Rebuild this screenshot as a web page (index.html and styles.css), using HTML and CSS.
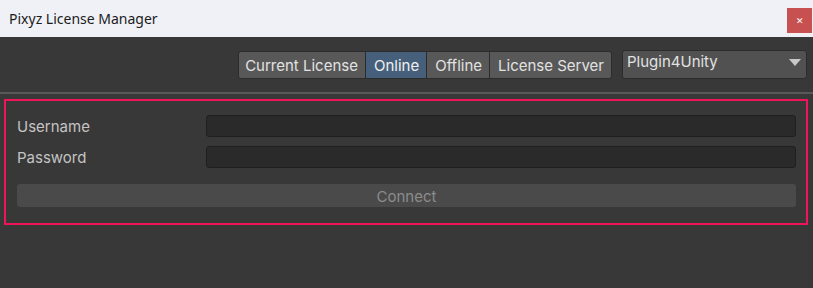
FILE: index.html
```html
<!DOCTYPE html>
<html>
	<head>
		<meta charset="utf-8">
		<title>Pixyz License Manager</title>
		<link rel="stylesheet" href="styles.css">
	</head>
	<body>
		<div class="window">
			<div class="titlebar">
				<span class="title">Pixyz License Manager</span>
				<span class="close">&#x2715;</span>
			</div>

			<div class="content">
				<div class="toolbar">
					<div class="tabs">
						<span class="tab">Current License</span>
						<span class="tab active">Online</span>
						<span class="tab">Offline</span>
						<span class="tab">License Server</span>
					</div>
					<div class="select">
						<span>Plugin4Unity</span>
						<i class="arrow"></i>
					</div>
				</div>

				<div class="separator"></div>

				<div class="panel">
					<div class="row">
						<label>Username</label>
						<div class="field"></div>
					</div>
					<div class="row">
						<label>Password</label>
						<div class="field"></div>
					</div>
					<div class="connect">Connect</div>
				</div>
			</div>
		</div>
	</body>
</html>
```

FILE: styles.css
```css
* {margin: 0; padding: 0; box-sizing: border-box;}

body {
	width: 813px;
	height: 288px;
	overflow: hidden;
	font-family: Inter, "Noto Sans", sans-serif;
}

.window {
	height: 288px;
	display: flex;
	flex-direction: column;
}

.titlebar {
	height: 37px;
	background: #eff1f6;
	display: flex;
	align-items: flex-start;
	justify-content: space-between;
	padding-left: 9px;
	padding-right: 1px;
}

.title {
	font-family: "Noto Sans", sans-serif;
	font-size: 14px;
	color: #1b1b1b;
	line-height: 37px;
}

.close {
	margin-top: 8px;
	width: 25px;
	height: 25px;
	background: #c75050;
	color: #fff;
	font-size: 9px;
	display: flex;
	align-items: center;
	justify-content: center;
}

.content {
	flex: 1;
	background: #383838;
}

.toolbar {
	display: flex;
	justify-content: flex-end;
	align-items: flex-start;
	gap: 10px;
	padding: 13px 6px 0 0;
}

.tabs {
	display: flex;
	margin-top: 1px;
	height: 28px;
	border: 1px solid #2c2c2c;
	border-radius: 3px;
	overflow: hidden;
	background: #585858;
}

.tab {
	font-size: 15px;
	color: #e2e2e2;
	line-height: 27px;
	padding: 0 7px 0 8px;
	border-left: 1px solid #2c2c2c;
}

.tab:first-child {
	border-left: none;
	padding-left: 6px;
}

.tab.active {
	background: #46607c;
	color: #f0f0f0;
}

.select {
	width: 185px;
	height: 29px;
	background: #515151;
	border: 1px solid #2c2c2c;
	border-radius: 3px;
	display: flex;
	justify-content: space-between;
	padding: 0 5px 0 4px;
	font-size: 15px;
	color: #e2e2e2;
	line-height: 22px;
}

.arrow {
	margin-top: 8px;
	width: 0;
	height: 0;
	border-left: 6px solid transparent;
	border-right: 6px solid transparent;
	border-top: 7px solid #c8c8c8;
}

.separator {
	height: 2px;
	margin-top: 13px;
	background: #585858;
}

.panel {
	margin: 5px 5px 0 4px;
	border: 2px solid #f01458;
	padding: 14px 10px 16px 11px;
	display: flex;
	flex-direction: column;
	gap: 9px;
}

.row {
	display: flex;
	align-items: center;
	height: 22px;
}

.row label {
	width: 189px;
	font-size: 15px;
	color: #c4c4c4;
}

.field {
	flex: 1;
	height: 22px;
	background: #2a2a2a;
	border: 1px solid #1f1f1f;
	border-radius: 3px;
}

.connect {
	margin-top: 7px;
	height: 23px;
	background: #4a4a4a;
	border-radius: 3px;
	text-align: center;
	font-size: 15px;
	line-height: 25px;
	color: #8c8c8c;
}
```
